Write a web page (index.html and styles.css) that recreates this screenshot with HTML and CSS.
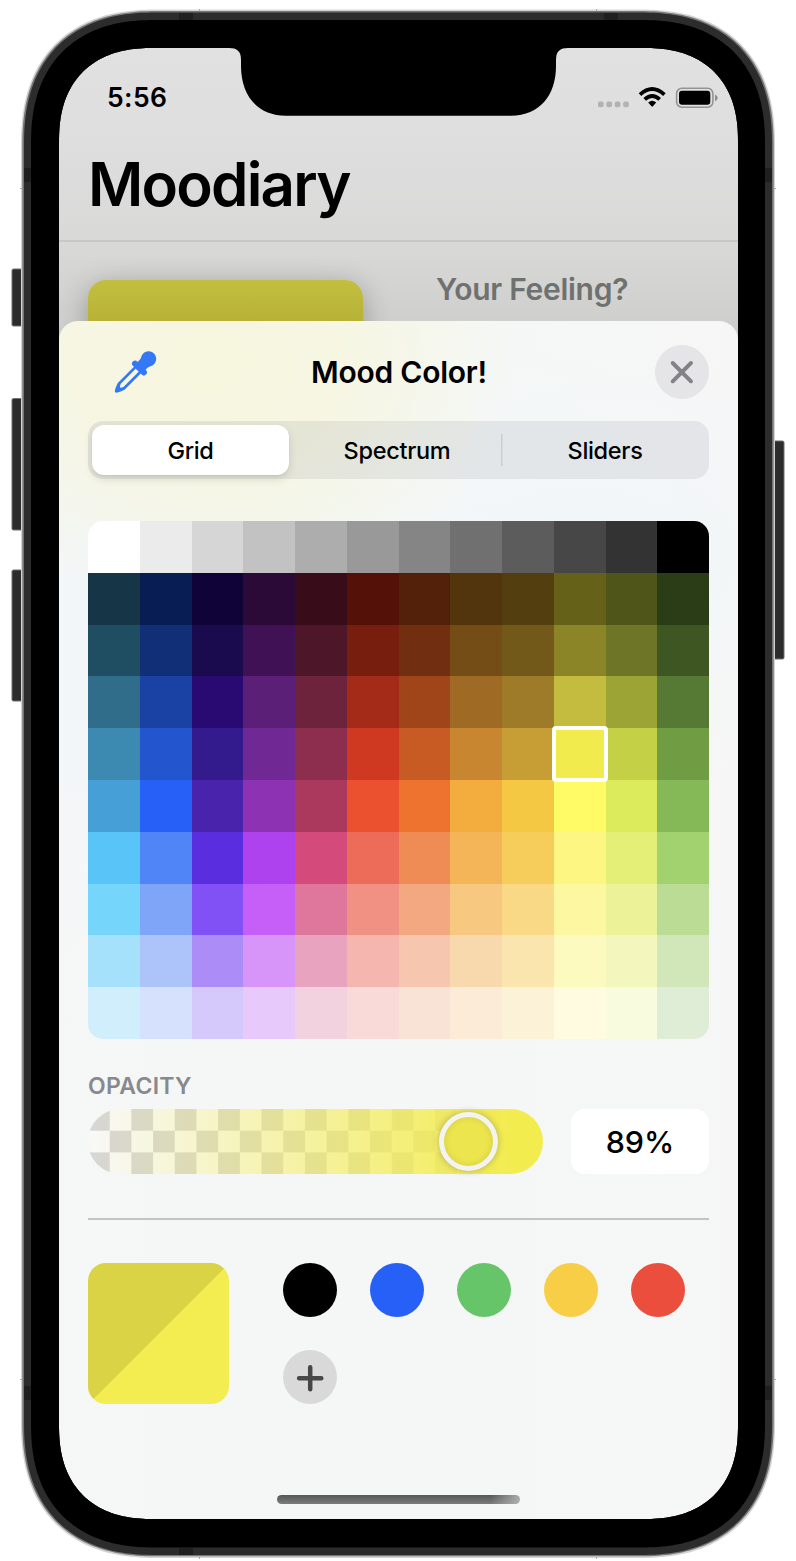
FILE: index.html
```
<!DOCTYPE html>
<html lang="en">
<head>
<meta charset="utf-8">
<title>Moodiary</title>
<link rel="stylesheet" href="styles.css">
</head>
<body>
<div class="device">
  <main class="screen">
    <header class="status">
      <span class="time">5:56</span>
      <svg class="status-icons" viewBox="0 0 122 24" width="122" height="24">
        <g fill="#b2b2b2">
          <rect x="1" y="15.5" width="5.6" height="5.8" rx="1.8"/>
          <rect x="9.4" y="15.5" width="5.6" height="5.8" rx="1.8"/>
          <rect x="17.8" y="15.5" width="5.6" height="5.8" rx="1.8"/>
          <rect x="26.2" y="15.5" width="5.6" height="5.8" rx="1.8"/>
        </g>
        <g fill="none" stroke="#000" stroke-width="3.8">
          <path d="M43 8.6Q55.2-2.600 67.4 8.6"/>
          <path d="M47.700 13.4Q55.2 6.400 62.700 13.4"/>
        </g>
        <path d="M51.2 16.4Q55.2 13.2 59.2 16.4L55.9 20.3Q55.2 21 54.5 20.3Z"/>
        <rect x="79.6" y="2.300" width="36.3" height="18.9" rx="5.2" fill="none" stroke="#939394" stroke-width="1.6"/>
        <rect x="82" y="4.700" width="31.3" height="14" rx="3"/>
        <path d="M118 8.4Q120.7 9.5 120.7 11.8T118 15.2Z" fill="#8e8e8e"/>
      </svg>
    </header>
    <h1 class="app-title">Moodiary</h1>
    <section class="entry">
      <div class="mood-card"></div>
      <p class="feeling">Your Feeling?</p>
    </section>

    <section class="sheet">
      <header class="sheet-head">
        <svg class="dropper" viewBox="0 0 48 48" width="48" height="48">
          <g transform="translate(2.8 44.7) rotate(-45)" fill="#3478f6">
            <path d="M1.2-1.3Q5-3.6 9-4.800H33V4.800H9Q5 3.6 1.2 1.3Q0 0 1.2-1.3ZM10.5-2.1Q7.5-1 7.5 0T10.5 2.1H32V-2.1Z" fill-rule="evenodd"/>
            <path d="M31.8-6.2A3 3 0 0 1 37.9-6.2V-5.5Q42-5.2 44-6.6A7.6 7.6 0 1 1 44 6.6Q42 5.2 37.9 5.5V6.2A3 3 0 0 1 31.8 6.2Z"/>
          </g>
        </svg>
        <h2 class="sheet-title">Mood Color!</h2>
        <button class="close" aria-label="Close">
          <svg viewBox="0 0 54 54" width="54" height="54"><path d="M17.7 18L36 36.3M36 18L17.7 36.3" stroke="#828186" stroke-width="3.9" stroke-linecap="round"/></svg>
        </button>
      </header>
      <nav class="tabs">
        <span class="tab active">Grid</span>
        <span class="tab middle">Spectrum</span>
        <span class="tab last">Sliders</span>
      </nav>
      <div class="palette" id="palette"></div>
      <h3 class="label">OPACITY</h3>
      <div class="opacity">
        <div class="slider"><div class="thumb"></div></div>
        <div class="value">89%</div>
      </div>
      <div class="saved">
        <div class="current"></div>
        <div class="swatches">
          <i class="dot black"></i><i class="dot blue"></i><i class="dot green"></i><i class="dot yellow"></i><i class="dot red"></i>
          <i class="dot add"><svg viewBox="0 0 54 54" width="54" height="54"><path d="M27.200 17.200V39.300M16.100 28.2H38.300" stroke="#474747" stroke-width="4.5" stroke-linecap="round"/></svg></i>
        </div>
      </div>
      <div class="home"></div>
    </section>
  </main>

  <svg class="frame" viewBox="0 0 796 1561" width="796" height="1561">
    <g fill="#2c2c2c" stroke="#6f6f6f" stroke-width="1">
      <rect x="12" y="269" width="13" height="57" rx="1.5"/>
      <rect x="12" y="398.5" width="13" height="131.500" rx="1.500"/>
      <rect x="12" y="570" width="13" height="131" rx="1.5"/>
      <rect x="771" y="441" width="13" height="218" rx="1.5"/>
    </g>
    <g fill-rule="evenodd">
      <path fill="#d3d3d3" data-box="21 9.500 754 1548.500 137" data-hole="59 48 679 1471 95"/>
      <path fill="#757575" data-box="22.300 11 751.400 1545.300 136" data-hole="59 48 679 1471 95"/>
      <path fill="#2c2c2c" data-box="24 12.500 748 1542.500 134" data-hole="59 48 679 1471 95"/>
      <path fill="#000" data-box="31 20 734 1527.500 126" data-hole="59 48 679 1471 95"/>
    </g>
    <path d="M229 46V48C237 48 241 51 241 60V66C241 95 257 115.700 286 115.700H511C540 115.700 556 95 556 66V60C556 51 560 48 568 48V46Z"/>
    <g fill="#1f1f1f">
      <rect x="179" y="13" width="14" height="7"/>
      <rect x="604" y="13" width="14" height="7"/>
      <rect x="179" y="1548" width="14" height="7"/>
      <rect x="24" y="168" width="7" height="14"/>
      <rect x="765" y="168" width="7" height="14"/>
      <rect x="24" y="1386" width="7" height="14"/>
      <rect x="765" y="1386" width="7" height="14"/>
    </g>
    <path stroke="#aaa" d="M199.500 9V11M596.500 9V11M199.500 1557V1559M596.500 1557V1559M20 188.500H22M774 188.500H776M20 1379.500H22M774 1379.500H776"/>
  </svg>
</div>
<script src="script.js"></script>
</body>
</html>
```
FILE: styles.css
```
* { box-sizing: border-box; }
body {
  margin: 0;
  background: #fff;
  font-family: Inter, "Liberation Sans", sans-serif;
  color: #000;
}
h1, h2, h3, p { margin: 0; white-space: nowrap; }

.device {
  position: relative;
  width: 796px;
  height: 1561px;
  padding: 48px 58px 42px 59px;
  overflow: hidden;
}
.frame {
  position: absolute;
  inset: 0;
  pointer-events: none;
}
.screen {
  position: relative;
  width: 679px;
  height: 1471px;
  overflow: hidden;
  background: linear-gradient(#e1e1e1 0, #dedede 90px, #d9d9d8 192px, #cecfcc 280px);
}

/* App behind the sheet */
.status {
  display: flex;
  justify-content: space-between;
  align-items: center;
  height: 32px;
  margin-top: 34px;
  padding: 0 19px 0 48px;
}
.time {
  margin-bottom: 2px;
  font-size: 26.5px;
  font-weight: 600;
  letter-spacing: 0.4px;
}
.status-icons { display: block; }
.app-title {
  height: 128px;
  padding: 35px 0 0 29px;
  border-bottom: 2px solid #c8c8c7;
  font-size: 60px;
  line-height: 70px;
  font-weight: 600;
  letter-spacing: -1.8px;
}
.entry { display: flex; padding: 38px 29px 0; }
.mood-card {
  width: 275px;
  height: 240px;
  border-radius: 18px;
  background: linear-gradient(#c2bf40, #b7b237 42px);
  box-shadow: 0 6px 28px rgba(0, 0, 0, 0.28);
}
.feeling {
  margin: -10px 0 0 73px;
  color: #6f7170;
  font-size: 30px;
  line-height: 38px;
  font-weight: 600;
  letter-spacing: -0.28px;
}

/* Colour picker sheet */
.sheet {
  position: absolute;
  inset: 273px 0 0;
  padding: 24px 29px 0;
  border-radius: 19px 19px 0 0;
  background:
    radial-gradient(310px 250px at 150px 40px, rgba(247, 246, 222, 1), rgba(246, 246, 224, 0.85) 45%, rgba(246, 247, 230, 0)),
    radial-gradient(420px 300px at 20px 330px, rgba(241, 246, 249, 1), rgba(241, 246, 249, 0)),
    radial-gradient(340px 200px at 520px 230px, rgba(241, 246, 249, 1), rgba(241, 246, 249, 0)),
    linear-gradient(90deg, #f6f6f6, #f5f7f7 90px, #f5f7f7 460px, #f6f6f6);
}
.sheet-head {
  display: flex;
  justify-content: space-between;
  align-items: center;
  height: 54px;
}
.dropper { margin-left: 24px; }
.sheet-title {
  margin-left: -17px;
  font-size: 30px;
  font-weight: 600;
  letter-spacing: -0.25px;
}
.close {
  width: 54px;
  height: 54px;
  padding: 0;
  border: 0;
  border-radius: 50%;
  background: #e5e5e8;
}
.close svg, .add svg { display: block; }
.tabs {
  display: grid;
  grid-template-columns: 197px 212px 208px;
  height: 58px;
  margin-top: 22px;
  padding: 4px 0 4px 4px;
  border-radius: 15px;
  background: rgba(118, 118, 128, 0.13);
  font-size: 23.5px;
  font-weight: 500;
  letter-spacing: -0.3px;
}
.tab { display: flex; align-items: center; justify-content: center; }
.active {
  border-radius: 12px;
  background: #fff;
  box-shadow: 0 4px 10px rgba(0, 0, 0, 0.12), 0 1px 2px rgba(0, 0, 0, 0.06);
}
.middle { padding-left: 4px; }
.last {
  background: linear-gradient(#cccdd0, #cccdd0) 0 50% / 1.5px 32px no-repeat;
}
.palette {
  display: grid;
  grid-template: repeat(10, 1fr) / repeat(12, 1fr);
  height: 518px;
  margin-top: 42px;
  border-radius: 15px;
}
.cell:first-child { border-top-left-radius: 15px; }
.cell:nth-child(12) { border-top-right-radius: 15px; }
.cell:nth-child(109) { border-bottom-left-radius: 15px; }
.cell:last-child { border-bottom-right-radius: 15px; }
.picked {
  position: relative;
  z-index: 1;
  outline: 4px solid #fff;
  outline-offset: -2px;
  border-radius: 2px;
}
.label {
  margin-top: 32px;
  color: #88898c;
  font-size: 23px;
  line-height: 30px;
  font-weight: 600;
  letter-spacing: 0.3px;
}
.opacity {
  display: flex;
  justify-content: space-between;
  height: 65px;
  margin-top: 8px;
}
.slider {
  width: 455px;
  padding: 3px 0 0 351px;
  border-radius: 33px;
  background:
    linear-gradient(90deg, rgba(243, 236, 78, 0), #f3ec4e 94%),
    repeating-conic-gradient(#f8f8f8 0 25%, #d6d6d6 0 50%) 0 0 / 43.400px 43.400px;
}
.thumb {
  width: 59px;
  height: 59px;
  border: 5px solid #f3f3f2;
  border-radius: 50%;
  background: #ece54e;
  box-shadow: 0 0 7px rgba(0, 0, 0, 0.26), inset 0 0 6px rgba(80, 70, 0, 0.16);
}
.value {
  width: 138px;
  border-radius: 14px;
  background: #fff;
  text-align: center;
  font-size: 30.5px;
  line-height: 65px;
  font-weight: 500;
}
.saved {
  display: flex;
  gap: 54px;
  margin-top: 43.500px;
  padding-top: 43px;
  border-top: 2px solid #c2c3c3;
}
.current {
  width: 141px;
  height: 141px;
  border-radius: 18px;
  background: linear-gradient(135deg, #dad345 50%, #f4ed51 50.300%);
}
.swatches {
  display: grid;
  grid-template-columns: repeat(5, 54px);
  grid-auto-rows: 54px;
  gap: 33px;
}
.dot { border-radius: 50%; overflow: hidden; }
.black { background: #000; }
.blue { background: #2760f6; }
.green { background: #66c568; }
.yellow { background: #f8ce46; }
.red { background: #eb4e3d; }
.add { background: #d9d9d9; }
.home {
  width: 243px;
  height: 9px;
  margin: 91px auto 0;
  border-radius: 5px;
  background:
    linear-gradient(90deg, rgba(180, 180, 180, 0) 88%, rgba(185, 185, 185, 0.85)),
    linear-gradient(#565656, #7c7c7c);
}
```
FILE: script.js
```
const rows = [
  "ffffff ebebeb d6d6d6 c2c2c2 adadad 999999 858585 707070 5c5c5c 474747 333333 000000",
  "163648 071d53 0f0338 2b0a38 380d19 541107 53200a 53350d 523e0f 666119 4f5518 2a3d16",
  "1f4d62 102f76 190b4e 401154 4e1629 781e0f 722e10 734c16 725819 8b8528 6f7526 3d5622",
  "306d8b 1a42a4 280a72 5b1f78 6e233d a42b17 a04419 9f6b24 9e7b29 c4bc3e 9ca436 567a33",
  "3c8ab2 2355cf 331a8d 702895 8d2e4f cf3821 c85b23 c88630 c79e36 f1eb4e c4d147 709c44",
  "469fd6 2760f6 4a23ac 8e32b4 aa395d eb512e ee732e f2ad3e f4c843 fefb67 dceb5c 85b856",
  "58c4f8 4f85f7 5a2edf ae42ee d44a7a ed6b59 ef8c55 f3b557 f6cd5b fef682 e4ef78 a2d16f",
  "76d5fa 7fa5f8 8251f5 c55ff7 df769c f09184 f3a882 f6c880 f9d985 fdf7a1 ebf297 badc95",
  "a5e1fb adc4fb ac8df7 d895f9 e8a4be f4b6af f6c6ae f8d9ad fbe5af fdfac0 f3f7bd d1e7ba",
  "d1eefd d5e1fd d5c8fa e7cafb f2d2de f9dad8 f9e3d7 fcecd7 fcf2d8 fefbe1 f9fbdf dfecd6"
];
const palette = document.getElementById("palette");
rows.forEach((row, r) => row.split(" ").forEach((hex, c) => {
  const cell = document.createElement("div");
  cell.className = r === 4 && c === 9 ? "cell picked" : "cell";
  cell.style.backgroundColor = "#" + hex;
  palette.append(cell);
}));

// Rectangle whose corners are superellipse quadrants of extent e.
function squircle(spec) {
  const [x, y, w, h, e] = spec.split(" ").map(Number);
  const power = 2 / 2.4;
  const steps = 60;
  const centres = [
    [x + w - e, y + h - e],
    [x + e, y + h - e],
    [x + e, y + e],
    [x + w - e, y + e]
  ];
  const curve = v => Math.sign(v) * Math.pow(Math.abs(v), power) * e;
  const points = [];
  centres.forEach(([cx, cy], quadrant) => {
    for (let i = 0; i <= steps; i++) {
      const a = (quadrant + i / steps) * Math.PI / 2;
      points.push((cx + curve(Math.cos(a))).toFixed(2) + " " + (cy + curve(Math.sin(a))).toFixed(2));
    }
  });
  return "M" + points.join("L") + "Z";
}
document.querySelectorAll("[data-box]").forEach(path => {
  path.setAttribute("d", squircle(path.dataset.box) + squircle(path.dataset.hole));
});
```
